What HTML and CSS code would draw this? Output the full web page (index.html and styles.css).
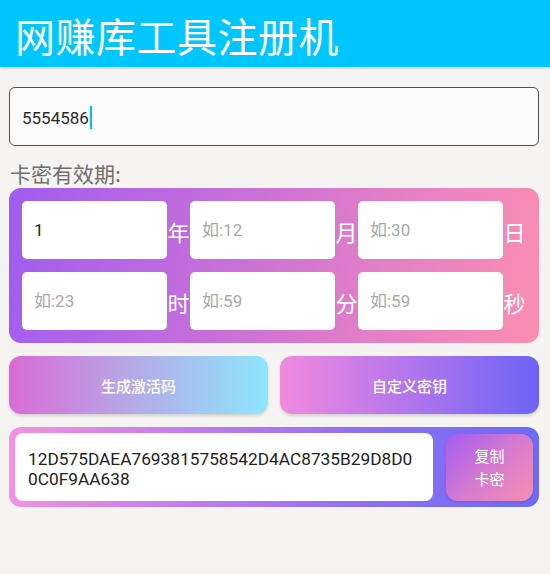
FILE: index.html
```html
<!DOCTYPE html>
<html lang="zh">
<head>
<meta charset="utf-8">
<title>网赚库工具注册机</title>
<link rel="stylesheet" href="styles.css">
</head>
<body>
<header class="appbar">
  <h1 class="title">网赚库工具注册机</h1>
</header>
<main class="content">
  <div class="code-input"><span class="code-text">5554586</span><span class="caret"></span></div>
  <div class="label">卡密有效期:</div>
  <section class="period">
    <input class="field" type="text" value="1"><span class="unit">年</span>
    <input class="field" type="text" placeholder="如:12"><span class="unit">月</span>
    <input class="field" type="text" placeholder="如:30"><span class="unit">日</span>
    <input class="field" type="text" placeholder="如:23"><span class="unit">时</span>
    <input class="field" type="text" placeholder="如:59"><span class="unit">分</span>
    <input class="field" type="text" placeholder="如:59"><span class="unit">秒</span>
  </section>
  <div class="actions">
    <button class="btn btn-generate">生成激活码</button>
    <button class="btn btn-custom">自定义密钥</button>
  </div>
  <section class="result">
    <div class="result-box"><div class="result-text">12D575DAEA7693815758542D4AC8735B29D8D00C0F9AA638</div></div>
    <button class="copy-btn">复制<br>卡密</button>
  </section>
</main>
</body>
</html>
```
FILE: styles.css
```css
* { box-sizing: border-box; }
html, body { margin: 0; padding: 0; }
body {
  background: #f5f4f2;
  font-family: Roboto, "Noto Sans CJK SC", sans-serif;
  width: 550px;
  height: 574px;
  overflow: hidden;
}
.appbar {
  height: 67px;
  background: #00c6fe;
  box-shadow: 0 1px 3px rgba(0,0,0,0.18);
  display: flex;
  align-items: center;
  padding-left: 15px;
}
.title {
  margin: 0;
  color: #fff;
  font-family: "Noto Sans CJK SC", sans-serif;
  font-weight: 400;
  font-size: 40px;
  line-height: 1;
  letter-spacing: 0.5px;
  padding-top: 3px;
}
.content {
  padding: 20px 11px 0 9px;
}
.code-input {
  height: 59px;
  border: 1.5px solid #505050;
  border-radius: 6px;
  background: #fbfbfb;
  display: flex;
  align-items: center;
  padding-left: 12px;
  padding-top: 2px;
}
.code-text {
  font-size: 17px;
  color: #2a2a2a;
}
.caret {
  display: inline-block;
  width: 2px;
  height: 23px;
  background: #00bff5;
  margin-left: 1px;
}
.label {
  margin-top: 13px;
  height: 28px;
  line-height: 28px;
  font-family: "Noto Sans CJK SC", sans-serif;
  font-size: 21px;
  color: #6f6f6f;
  padding-left: 1px;
}
.period {
  margin-top: 1px;
  display: grid;
  grid-template-columns: repeat(3, 145px 23px);
  row-gap: 13px;
  padding: 13px;
  border-radius: 12px;
  background: linear-gradient(100deg, #a05cf1 0%, #c66fda 40%, #e580c4 72%, #fb8eb1 100%);
}
.field {
  width: 145px;
  height: 58px;
  border: none;
  border-radius: 5px;
  background: #fff;
  padding: 0 12px;
  font-family: Roboto, "Noto Sans CJK SC", sans-serif;
  font-size: 17px;
  color: #222;
  outline: none;
}
.field::placeholder { color: #a9a9a9; }
.unit {
  align-self: center;
  text-align: center;
  color: #fff;
  font-family: "Noto Sans CJK SC", sans-serif;
  font-size: 22px;
  line-height: 1;
  padding-top: 1px;
}
.actions {
  margin-top: 13px;
  display: grid;
  grid-template-columns: 1fr 1fr;
  column-gap: 12px;
}
.btn {
  height: 58px;
  border: none;
  border-radius: 12px;
  color: #fff;
  font-family: "Noto Sans CJK SC", sans-serif;
  font-size: 15px;
  font-weight: 500;
  box-shadow: 0 2px 3px rgba(0,0,0,0.14);
  padding: 0;
}
.btn-generate {
  background: linear-gradient(90deg, #d96bd5 0%, #b7a6e6 45%, #8ee6fd 100%);
}
.btn-custom {
  background: linear-gradient(90deg, #f08ade 0%, #c67be9 35%, #6c63f6 100%);
}
.result {
  margin-top: 13px;
  height: 80px;
  border-radius: 12px;
  padding: 6px;
  display: flex;
  align-items: stretch;
  column-gap: 13px;
  background: linear-gradient(90deg, #f292e0 0%, #c27ce9 35%, #9270f1 65%, #6d6bf6 100%);
}
.result-box {
  flex: 1;
  background: #fff;
  border-radius: 8px;
  display: flex;
  align-items: center;
  padding: 3px 15px 0 13px;
}
.result-text {
  font-size: 17.3px;
  line-height: 20px;
  color: #222;
  word-break: break-all;
}
.copy-btn {
  width: 87px;
  height: 67px;
  align-self: center;
  border: none;
  border-radius: 12px;
  background: linear-gradient(135deg, #a35cf0 0%, #d47ad0 50%, #f78fb1 100%);
  color: #fff;
  font-family: "Noto Sans CJK SC", sans-serif;
  font-size: 15px;
  line-height: 23px;
  padding: 0;
  box-shadow: 0 1px 3px rgba(0,0,0,0.12);
}
```
